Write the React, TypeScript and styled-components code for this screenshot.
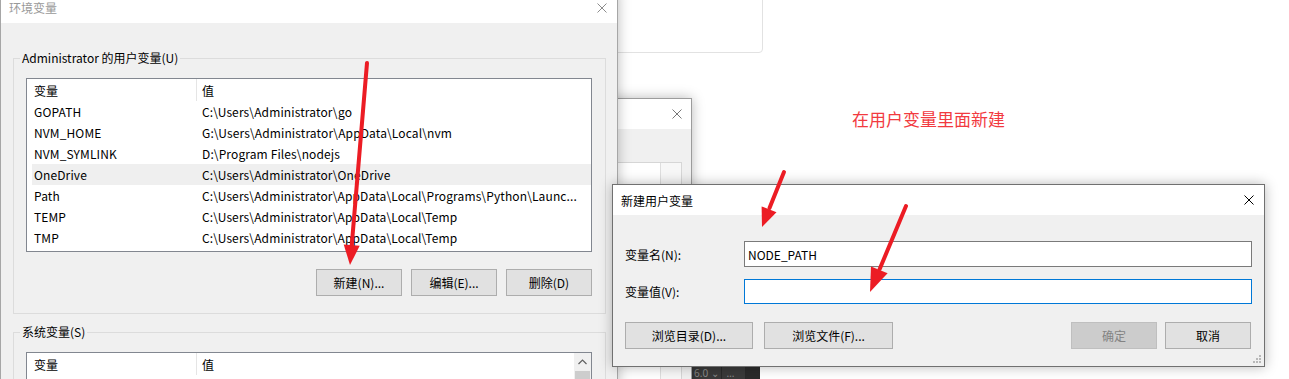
import React from 'react';
import styled, { createGlobalStyle } from 'styled-components';

const GlobalStyle = createGlobalStyle`
  html, body {
    margin: 0;
    padding: 0;
    background: #fff;
  }
  body {
    font-family: "Noto Sans CJK SC", "Noto Sans", sans-serif;
    font-size: 12px;
    color: #000;
  }
`;

const Desktop = styled.div`
  position: relative;
  width: 1289px;
  height: 379px;
  overflow: hidden;
  background: #fff;
`;

interface WindowProps {
  $left: number;
  $top: number;
  $width: number;
  $height: number;
  $z: number;
  $border?: string;
}

const Window = styled.div<WindowProps>`
  position: absolute;
  left: ${(p) => p.$left}px;
  top: ${(p) => p.$top}px;
  width: ${(p) => p.$width}px;
  height: ${(p) => p.$height}px;
  z-index: ${(p) => p.$z};
  box-sizing: border-box;
  border: 1px solid ${(p) => p.$border ?? '#aaaaaa'};
  background: #f0f0f0;
  box-shadow: 0 0 12px rgba(0, 0, 0, 0.28);
  display: flex;
  flex-direction: column;
`;

const Card = styled.div`
  position: absolute;
  left: 450px;
  top: -6px;
  width: 313px;
  height: 59px;
  box-sizing: border-box;
  border: 1px solid #e2e2e2;
  border-radius: 4px;
  background: #fff;
  z-index: 1;
`;

const TitleBar = styled.div<{ $height: number; $inactive?: boolean; $padRight: number }>`
  flex: none;
  height: ${(p) => p.$height}px;
  background: #fff;
  display: flex;
  align-items: center;
  justify-content: space-between;
  padding: 0 ${(p) => p.$padRight}px 0 8px;
  color: ${(p) => (p.$inactive ? '#999' : '#000')};
  font-size: 12px;
`;

const CloseIcon = ({ color }: { color: string }) => (
  <svg width="10" height="10" viewBox="0 0 10 10">
    <path d="M0.5 0.5 L9.5 9.5 M9.5 0.5 L0.5 9.5" stroke={color} strokeWidth="1" fill="none" />
  </svg>
);

/* ---------- main window ---------- */

const MainBody = styled.div`
  flex: 1;
  display: flex;
  flex-direction: column;
  padding: 27px 11px 0 12px;
`;

const Group = styled.fieldset`
  margin: 0;
  padding: 12px 13px 17px 12px;
  border: 1px solid #dcdcdc;
  min-width: 0;
  & + & {
    margin-top: 10px;
  }
`;

const GroupLabel = styled.legend`
  padding: 0 2px;
  margin-left: -6px;
  line-height: 16px;
  font-size: 12px;
`;

const ListBox = styled.div<{ $height: number }>`
  height: ${(p) => p.$height}px;
  box-sizing: border-box;
  border: 1px solid #828790;
  background: #fff;
  display: flex;
  overflow: hidden;
`;

const ListInner = styled.div`
  flex: 1;
  min-width: 0;
  display: flex;
  flex-direction: column;
`;

const HeaderRow = styled.div`
  flex: none;
  display: grid;
  grid-template-columns: 169px 1fr;
  height: 22px;
`;

const HeaderCell = styled.div<{ $first?: boolean }>`
  display: flex;
  align-items: center;
  padding-left: ${(p) => (p.$first ? 7 : 5)}px;
  border-left: ${(p) => (p.$first ? 'none' : '1px solid #e5e5e5')};
`;

const Row = styled.div<{ $selected?: boolean }>`
  display: grid;
  grid-template-columns: 164px 1fr;
  height: 21px;
  margin-left: 5px;
  align-items: center;
  white-space: nowrap;
  letter-spacing: 0.12px;
  background: ${(p) => (p.$selected ? '#efefef' : 'transparent')};
`;

const Cell = styled.span<{ $first?: boolean }>`
  padding-left: ${(p) => (p.$first ? 2 : 6)}px;
  overflow: hidden;
`;

const ScrollBar = styled.div`
  flex: none;
  width: 17px;
  display: flex;
  flex-direction: column;
  background: #f0f0f0;
`;

const ScrollArrow = styled.div`
  height: 17px;
  display: flex;
  align-items: center;
  justify-content: center;
`;

const ScrollThumb = styled.div`
  margin: 1px 1px 0;
  flex: 1;
  background: #cdcdcd;
`;

const ButtonRow = styled.div`
  display: flex;
  justify-content: flex-end;
  gap: 9px;
  margin-top: 17px;
`;

const Button = styled.button<{ $width: number; $disabled?: boolean }>`
  width: ${(p) => p.$width}px;
  height: 27px;
  box-sizing: border-box;
  padding: 0;
  border: 1px solid ${(p) => (p.$disabled ? '#bfbfbf' : '#adadad')};
  background: ${(p) => (p.$disabled ? '#cccccc' : '#e1e1e1')};
  color: ${(p) => (p.$disabled ? '#838383' : '#000')};
  font-family: inherit;
  font-size: 12px;
`;

/* ---------- window behind ---------- */

const BackBody = styled.div`
  flex: 1;
  display: flex;
  justify-content: flex-end;
  padding: 33px 9px 0 0;
`;

const BackPanel = styled.div`
  width: 200px;
  height: 300px;
  box-sizing: border-box;
  border: 1px solid #d6d6d6;
  background: #fff;
  display: flex;
  justify-content: flex-end;
`;

const BackColumn = styled.div`
  width: 20px;
  border-left: 1px solid #dedede;
  background: #f7f7f7;
`;

const DarkPane = styled.div`
  position: absolute;
  left: 692px;
  top: 340px;
  width: 68px;
  height: 39px;
  background: #3a3a3a;
  z-index: 1;
  display: flex;
  flex-direction: column;
  padding-top: 27px;
  box-sizing: border-box;
`;

const DarkStrip = styled.div`
  display: flex;
  align-items: center;
  height: 12px;
  color: #8a8a8a;
  font-family: "Noto Sans", sans-serif;
  font-size: 10px;
  line-height: 12px;
`;

const DarkItem = styled.span<{ $width: number; $dark?: boolean }>`
  width: ${(p) => p.$width}px;
  height: 100%;
  display: flex;
  align-items: center;
  padding-left: 2px;
  box-sizing: border-box;
  border-right: 1px solid #2a2a2a;
  background: ${(p) => (p.$dark ? '#2b2b2b' : 'transparent')};
`;

/* ---------- dialog ---------- */

const DialogBody = styled.div`
  flex: 1;
  position: relative;
  padding: 26px 12px 17px 12px;
  display: flex;
  flex-direction: column;
`;

const FormGrid = styled.div`
  display: grid;
  grid-template-columns: 119px 1fr;
  row-gap: 12px;
  align-items: center;
`;

const Field = styled.input<{ $height: number; $focused?: boolean }>`
  height: ${(p) => p.$height}px;
  box-sizing: border-box;
  border: 1px solid ${(p) => (p.$focused ? '#0078d7' : '#7a7a7a')};
  background: #fff;
  padding: 0 3px;
  margin: 0;
  font-family: inherit;
  font-size: 12px;
  color: #000;
  outline: none;
`;

const DialogButtons = styled.div`
  display: flex;
  justify-content: space-between;
  margin-top: 18px;
`;

const ButtonGroup = styled.div<{ $gap: number }>`
  display: flex;
  gap: ${(p) => p.$gap}px;
  margin-right: 1px;
`;

const Grip = styled.svg`
  position: absolute;
  right: 3px;
  bottom: 3px;
`;

const Note = styled.div`
  position: absolute;
  left: 852px;
  top: 107px;
  z-index: 5;
  color: #f23a3f;
  font-size: 17px;
  line-height: 24px;
`;

const Overlay = styled.svg`
  position: absolute;
  left: 0;
  top: 0;
  z-index: 6;
  pointer-events: none;
`;

const userVars = [
  ['GOPATH', 'C:\\Users\\Administrator\\go'],
  ['NVM_HOME', 'G:\\Users\\Administrator\\AppData\\Local\\nvm'],
  ['NVM_SYMLINK', 'D:\\Program Files\\nodejs'],
  ['OneDrive', 'C:\\Users\\Administrator\\OneDrive'],
  ['Path', 'C:\\Users\\Administrator\\AppData\\Local\\Programs\\Python\\Launc...'],
  ['TEMP', 'C:\\Users\\Administrator\\AppData\\Local\\Temp'],
  ['TMP', 'C:\\Users\\Administrator\\AppData\\Local\\Temp'],
];

const arrows = [
  { line: '367,63 351.6,247', head: '350,265 359.7,245.8 343.7,244.4' },
  { line: '784,172 769.5,208', head: '762,227 776.5,212.3 761.6,206.4' },
  { line: '906,206 879.7,269', head: '870,292 887.6,273.3 871,266.4' },
];

export default function App() {
  return (
    <Desktop>
      <GlobalStyle />
      <Card />

      <Window $left={400} $top={98} $width={292} $height={320} $z={2} $border="#9c9c9c">
        <TitleBar $height={30} $padRight={9} $inactive>
          <span />
          <CloseIcon color="#777" />
        </TitleBar>
        <BackBody>
          <BackPanel>
            <BackColumn />
          </BackPanel>
        </BackBody>
      </Window>

      <DarkPane>
        <DarkStrip>
          <DarkItem $width={30}>6.0 ⌄</DarkItem>
          <DarkItem $width={24}>&nbsp;…</DarkItem>
          <DarkItem $width={14} $dark />
        </DarkStrip>
      </DarkPane>

      <Window $left={0} $top={-9} $width={618} $height={440} $z={3} $border="#a6a6a6">
        <TitleBar $height={31} $padRight={10} $inactive>
          <span>环境变量</span>
          <CloseIcon color="#8c8c8c" />
        </TitleBar>
        <MainBody>
          <Group>
            <GroupLabel>Administrator 的用户变量(U)</GroupLabel>
            <ListBox $height={174}>
              <ListInner>
                <HeaderRow>
                  <HeaderCell $first>变量</HeaderCell>
                  <HeaderCell>值</HeaderCell>
                </HeaderRow>
                {userVars.map(([name, value], i) => (
                  <Row key={name} $selected={i === 3}>
                    <Cell $first>{name}</Cell>
                    <Cell>{value}</Cell>
                  </Row>
                ))}
              </ListInner>
            </ListBox>
            <ButtonRow>
              <Button $width={86}>新建(N)...</Button>
              <Button $width={86}>编辑(E)...</Button>
              <Button $width={86}>删除(D)</Button>
            </ButtonRow>
          </Group>
          <Group>
            <GroupLabel>系统变量(S)</GroupLabel>
            <ListBox $height={120}>
              <ListInner>
                <HeaderRow>
                  <HeaderCell $first>变量</HeaderCell>
                  <HeaderCell>值</HeaderCell>
                </HeaderRow>
              </ListInner>
              <ScrollBar>
                <ScrollArrow>
                  <svg width="9" height="6" viewBox="0 0 9 6">
                    <path d="M0.5 5 L4.5 1 L8.5 5" stroke="#606060" strokeWidth="1.2" fill="none" />
                  </svg>
                </ScrollArrow>
                <ScrollThumb />
              </ScrollBar>
            </ListBox>
          </Group>
        </MainBody>
      </Window>

      <Window $left={612} $top={184} $width={653} $height={183} $z={4} $border="#707070">
        <TitleBar $height={30} $padRight={10}>
          <span>新建用户变量</span>
          <CloseIcon color="#000" />
        </TitleBar>
        <DialogBody>
          <FormGrid>
            <span>变量名(N):</span>
            <Field $height={26} defaultValue="NODE_PATH" readOnly />
            <span>变量值(V):</span>
            <Field $height={25} $focused defaultValue="" readOnly />
          </FormGrid>
          <DialogButtons>
            <ButtonGroup $gap={11}>
              <Button $width={128}>浏览目录(D)...</Button>
              <Button $width={129}>浏览文件(F)...</Button>
            </ButtonGroup>
            <ButtonGroup $gap={8}>
              <Button $width={86} $disabled>确定</Button>
              <Button $width={86}>取消</Button>
            </ButtonGroup>
          </DialogButtons>
          <Grip width="9" height="9" viewBox="0 0 9 9">
            {[
              [7, 1],
              [7, 4],
              [4, 4],
              [7, 7],
              [4, 7],
              [1, 7],
            ].map(([x, y]) => (
              <rect key={`${x}-${y}`} x={x} y={y} width="2" height="2" fill="#b8b8b8" />
            ))}
          </Grip>
        </DialogBody>
      </Window>

      <Note>在用户变量里面新建</Note>

      <Overlay width="1289" height="379" viewBox="0 0 1289 379">
        {arrows.map((a) => (
          <g key={a.line}>
            <polyline points={a.line} stroke="#ec1c24" strokeWidth="4" strokeLinecap="round" fill="none" />
            <polygon points={a.head} fill="#ec1c24" />
          </g>
        ))}
      </Overlay>
    </Desktop>
  );
}
